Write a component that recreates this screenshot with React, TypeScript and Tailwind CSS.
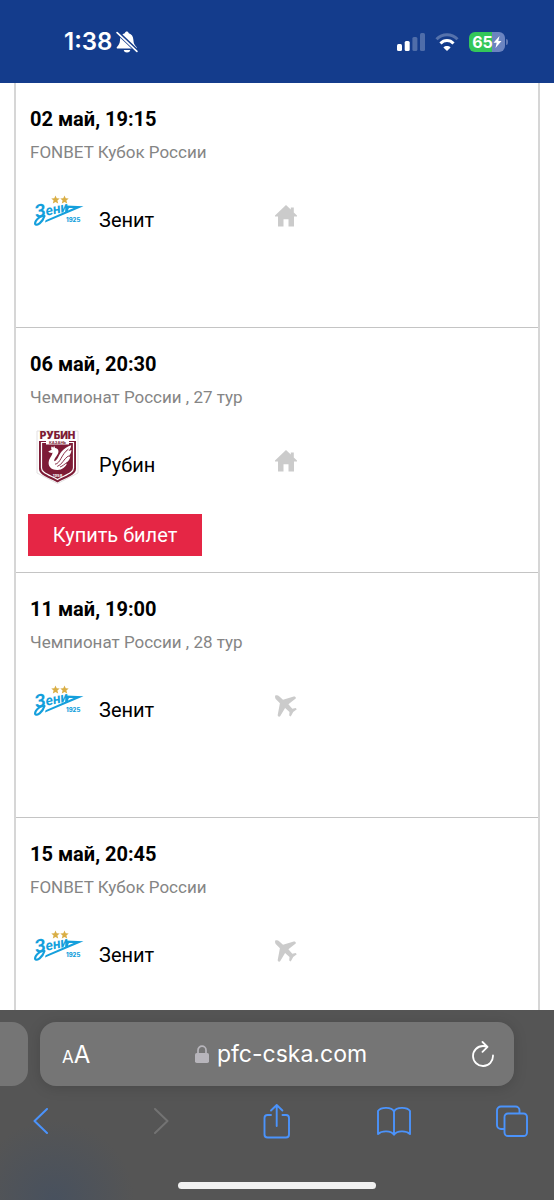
import React from "react";

type Club = "zenit" | "rubin";

interface Match {
  id: number;
  date: string;
  tournament: string;
  club: Club;
  home: boolean;
  tickets?: boolean;
}

const CLUB_NAMES: Record<Club, string> = {
  zenit: "Зенит",
  rubin: "Рубин",
};

const MATCHES: Match[] = [
  { id: 1, date: "02 май, 19:15", tournament: "FONBET Кубок России", club: "zenit", home: true },
  { id: 2, date: "06 май, 20:30", tournament: "Чемпионат России , 27 тур", club: "rubin", home: true, tickets: true },
  { id: 3, date: "11 май, 19:00", tournament: "Чемпионат России , 28 тур", club: "zenit", home: false },
  { id: 4, date: "15 май, 20:45", tournament: "FONBET Кубок России", club: "zenit", home: false },
];

function ZenitLogo() {
  return (
    <svg className="w-[54px] h-[54px]" viewBox="0 0 54 54">
      <g fill="#d9ae45">
        <path d="M25.500 10.600l1.200 2.700 3 .3-2.300 1.900.8 2.900-2.700-1.500-2.700 1.500.8-2.900-2.300-1.900 3-.3z" />
        <path d="M34.500 10.600l1.200 2.700 3 .3-2.300 1.900.8 2.900-2.700-1.500-2.700 1.500.8-2.900-2.300-1.900 3-.3z" />
      </g>
      <text
        transform="translate(6 33) rotate(-12)"
        fontFamily="Roboto, sans-serif"
        fontStyle="italic"
        fontWeight="700"
        fill="#149fdc"
      >
        <tspan fontSize="18">З</tspan>
        <tspan fontSize="14">ени</tspan>
      </text>
      <path fill="none" stroke="#149fdc" strokeWidth="2.200" strokeLinecap="round" d="M12.500 31c-4 .8-8 5.500-7.300 8 1.200 2.600 7.500-1.800 9.300-8" />
      <path fill="#149fdc" d="M36 20.600l17.500.6L15 37.600l.6-2.400 28-12.200-4.600-.1-2 4.300-2 .4z" />
      <text x="36" y="37" fontFamily="Inter, sans-serif" fontSize="6" fontWeight="800" fill="#149fdc">
        1925
      </text>
    </svg>
  );
}

function RubinLogo() {
  return (
    <svg className="w-[54px] h-[54px]" viewBox="0 0 54 54">
      <path fill="#fff" stroke="#e3e0e1" d="M7 1h41v42L27.500 53.500 7 43z" />
      <text x="27.500" y="9" textAnchor="middle" fontFamily="Inter, sans-serif" fontSize="10" fontWeight="900" fill="#7d1c36">
        РУБИН
      </text>
      <text x="27.500" y="13.500" textAnchor="middle" fontFamily="Inter, sans-serif" fontSize="4" fontWeight="700" fill="#7d1c36">
        КАЗАНЬ
      </text>
      <path fill="#7d1c36" d="M9 11h7v3.500h23V11h7v28c0 6-9 8-18.500 13.500C18 47 9 45 9 39z" />
      <path fill="none" stroke="#fff" strokeWidth="1.200" d="M16 12.500h-4.500V38c0 5 8 7 16 11.500 8-4.500 16-6.500 16-11.500V12.500H39" />
      <g transform="translate(-3 -5) scale(1.120)">
        <path
          fill="#fff"
          d="M19 23.600l3-1.500c-.8-1.200-.3-2.200.2-3.100l1.200 1.400.8-1.800.9 1.900c2.800.3 3.800 2.900 2.400 5.300-1.600 2.800-3.500 4.400-3.100 6.500 3.200-1 3.500-5.200 6.500-8.700 2.300-2.700 5.200-4.500 8.600-5.600-.3 2.200-1.200 3.800-2.400 5.200l2.600-.8c-.2 2.800-1.500 4.800-3.200 6.200l2.200-.4c-.6 3.200-2.400 5-4.400 6.200h1.500c-1.500 3.300-4.400 5.600-8.400 5.800-6 .2-9-3.400-7.900-8 .7-3 3.400-5 3.200-7.600-.6.600-2.500.3-3.700-1z"
        />
        <path fill="none" stroke="#7d1c36" strokeWidth="0.800" d="M25 35c5-.5 5.500-9 12-13.500M27 37c4.500-1.500 5.500-6.500 10-9.500M29.500 37.500c2.500-.8 4-2.800 6.500-4" />
      </g>
      <text x="27.500" y="46.500" textAnchor="middle" fontFamily="Inter, sans-serif" fontSize="4" fontWeight="700" fill="#fff">
        1958
      </text>
    </svg>
  );
}

function HomeIcon() {
  return (
    <svg className="w-[22px] h-[22px]" viewBox="0 0 22 22" fill="#cbcbcb" role="img" aria-label="Дома">
      <path d="M11 0l4.800 4.600V2.500h3V7.400L22 10.600v1H19V21.500h-5.500v-7.300h-5v7.300H3V11.600H0v-1z" />
    </svg>
  );
}

function PlaneIcon() {
  return (
    <svg className="w-[22px] h-[22px]" viewBox="0 0 22 22" fill="#cbcbcb" role="img" aria-label="В гостях">
      <path d="M.3.600C1.500-.2 3.200.3 4.400 1.400L8 4.700l10.800-3.200c1.300-.3 2.600 1 1.900 2.100l-7.300 5.600 3.900 4.600 3.400-.9 1.100 1.300-3.600 2.700-2.500 4.600-1.500-1 .3-3.500-4.400-4.100-4.800 8.100c-.8 1.200-2.600.6-2.600-.9L4.900 8.200 1.200 4.500C.2 3.400-.3 1.600.3.600z" />
    </svg>
  );
}

function MatchRow({ match }: { match: Match }) {
  return (
    <li className="h-[245px] shrink-0 border-b border-[#c4c4c4] px-3 pt-5">
      <div className="px-0.5">
        <h2 className="text-[20px] leading-[32px] font-bold text-black">{match.date}</h2>
        <p className="text-[17px] leading-[34px] text-[#858585]">{match.tournament}</p>
        <div className="mt-4 grid h-[54px] grid-cols-[69px_176px_1fr] items-center">
          {match.club === "zenit" ? <ZenitLogo /> : <RubinLogo />}
          <span className="self-end text-[20px] leading-[38px] text-black">{CLUB_NAMES[match.club]}</span>
          <div className="pt-2">{match.home ? <HomeIcon /> : <PlaneIcon />}</div>
        </div>
      </div>
      {match.tickets && (
        <button className="mt-[30px] block h-[42px] w-[174px] bg-[#e52645] text-[20px] leading-[40px] text-white">
          Купить билет
        </button>
      )}
    </li>
  );
}

function StatusBar() {
  return (
    <header className="flex h-[83px] shrink-0 items-center justify-between bg-[#143c8c] pr-[46px] pl-16 font-[Inter,sans-serif] text-white">
      <div className="flex items-center gap-1">
        <span className="text-[24px] leading-[32px] font-semibold">1:38</span>
        <svg className="w-[22px] h-[22px]" viewBox="0 0 20 20">
          <path fill="#fff" d="M4.300 5.500c.8-1.800 2-2.900 3.700-3.400C8.300 1 9 .500 9.800.500s1.500.500 1.800 1.600c2.700.7 4 3 4.200 5.900.2 3.600 1 4.700 2.800 6.500.6.700.3 1.500-.6 1.500H1.500c-.9 0-1.200-.8-.6-1.500C2.500 12.700 3.500 11.500 3.700 8c0-1 .2-1.800.6-2.500zM7 17.200h6c-.3 1.500-1.400 2.300-3 2.300s-2.700-.8-3-2.300z" />
          <path stroke="#143c8c" strokeWidth="3.600" d="M1 1l19 18" />
          <path stroke="#fff" strokeWidth="1.500" strokeLinecap="round" d="M1 1.500l18 17" />
        </svg>
      </div>
      <div className="flex items-center">
        <svg className="h-[18px] w-7" viewBox="0 0 28 18" fill="#fff">
          <rect x="0" y="11" width="5" height="7" rx="1.500" />
          <rect x="7.700" y="8" width="5" height="10" rx="1.500" />
          <rect x="15.400" y="4" width="5" height="14" rx="1.500" opacity="0.250" />
          <rect x="23" y="0" width="5" height="18" rx="1.500" opacity="0.250" />
        </svg>
        <svg className="ml-[10px] h-[18px] w-6" viewBox="0 0 24 18" fill="none" stroke="#fff">
          <path opacity="0.280" strokeWidth="3" d="M1.500 6.300C7.500.1 16.500.1 22.500 6.300" />
          <path strokeWidth="3" d="M5.500 10.500c3.700-3.900 9.300-3.900 13 0" />
          <path stroke="none" fill="#fff" d="M12 18l-3.600-3.600c2-1.900 5.200-1.900 7.200 0z" />
        </svg>
        <div className="ml-[10px] flex h-5 w-9 items-center justify-center rounded-[6px] bg-linear-to-r from-[#34c759] from-65% to-[#6b84c0] to-65% text-[16px] leading-[20px] font-bold">
          65
          <svg className="h-3 w-[9px]" viewBox="0 0 9 12" fill="#fff">
            <path d="M6.500 0L.5 6.800h3.200L2.500 12l6-6.900H5.300z" />
          </svg>
        </div>
        <span className="ml-px h-[6px] w-0.5 rounded-r-full bg-[#5f78b4]" />
      </div>
    </header>
  );
}

function BrowserBar() {
  return (
    <footer className="h-[190px] shrink-0 bg-[#555] bg-[radial-gradient(circle_at_54px_190px,#48515e,#555_80px)] pt-3 font-[Inter,sans-serif]">
      <div className="flex h-16 gap-3">
        <div className="w-7 rounded-r-[16px] bg-[#757575]" />
        <div className="mr-10 flex flex-1 items-center justify-between rounded-[16px] bg-[#757575] pr-5 pl-[22px] text-white shadow-[0_2px_14px_rgba(0,0,0,0.15)]">
          <button aria-label="Размер текста" className="flex w-7 items-baseline pt-1">
            <span className="text-[17px] leading-[32px]">A</span>
            <span className="text-[24px] leading-[32px]">A</span>
          </button>
          <div className="flex items-center gap-2">
            <svg className="h-[18px] w-[14px]" viewBox="0 0 14 18">
              <rect y="8" width="14" height="10" rx="1.800" fill="#b7b5bb" />
              <path d="M3 9V5.200a4 4 0 0 1 8 0V9" fill="none" stroke="#b7b5bb" strokeWidth="1.700" />
            </svg>
            <span className="text-[23px] leading-[32px]">pfc-cska.com</span>
          </div>
          <button aria-label="Обновить">
            <svg className="h-[26px] w-[22px]" viewBox="0 0 22 26" fill="none" stroke="#fff" strokeWidth="1.800" strokeLinecap="round" strokeLinejoin="round">
              <path d="M21 14.500a10 10 0 1 1-10-9.500c1.800 0 3 .3 4.200.8M10.500 1l5 4.900-5 5" />
            </svg>
          </button>
        </div>
      </div>
      <nav className="mt-[17px] flex h-9 items-center justify-between px-[26px]">
        <button aria-label="Назад">
          <svg className="h-[26px] w-8" viewBox="0 0 32 26" fill="none" stroke="#4b93fb" strokeWidth="2" strokeLinecap="round" strokeLinejoin="round">
            <path d="M21 1L8.500 13 21 25" />
          </svg>
        </button>
        <button aria-label="Вперёд" disabled>
          <svg className="h-[26px] w-8" viewBox="0 0 32 26" fill="none" stroke="#737373" strokeWidth="2" strokeLinecap="round" strokeLinejoin="round">
            <path d="M12 1l12.500 12L12 25" />
          </svg>
        </button>
        <button aria-label="Поделиться">
          <svg className="h-9 w-8" viewBox="0 0 32 36" fill="none" stroke="#4b93fb" strokeWidth="1.900" strokeLinecap="round" strokeLinejoin="round">
            <path d="M12 12H8.500a3 3 0 0 0-3 3v16.500a3 3 0 0 0 3 3H27a3 3 0 0 0 3-3V15a3 3 0 0 0-3-3H23.500M17.700 23V2M12 7.500L17.700 2l5.700 5.500" />
          </svg>
        </button>
        <button aria-label="Закладки">
          <svg className="h-9 w-9" viewBox="0 0 36 36" fill="none" stroke="#4b93fb" strokeWidth="1.900" strokeLinecap="round" strokeLinejoin="round">
            <path d="M18 8.500C15.500 3.800 5 3.800 2 8v23c4-3.600 13-3.600 16 .8 3-4.400 12-4.400 16-.8V8c-3-4.200-13.500-4.200-16 .5zM18 8.500v23" />
          </svg>
        </button>
        <button aria-label="Вкладки">
          <svg className="h-9 w-8" viewBox="0 0 32 36" fill="none" stroke="#4b93fb" strokeWidth="1.900" strokeLinejoin="round">
            <path d="M8.500 26H5a4 4 0 0 1-4-4V7.500a4 4 0 0 1 4-4h14.500a4 4 0 0 1 4 4V10" />
            <rect x="8.500" y="10.500" width="22.500" height="22.500" rx="3.500" />
          </svg>
        </button>
      </nav>
      <div className="mx-auto mt-[43px] h-[7px] w-[198px] rounded-full bg-[#f0f0f0]" />
    </footer>
  );
}

export default function App() {
  return (
    <div className="flex h-screen flex-col overflow-hidden bg-white font-[Roboto,sans-serif]">
      <StatusBar />
      <main className="min-h-0 flex-1 overflow-hidden px-[14px]">
        <ul className="flex flex-col border-x-2 border-[#d6d6d6]">
          {MATCHES.map((match) => (
            <MatchRow key={match.id} match={match} />
          ))}
        </ul>
      </main>
      <BrowserBar />
    </div>
  );
}
